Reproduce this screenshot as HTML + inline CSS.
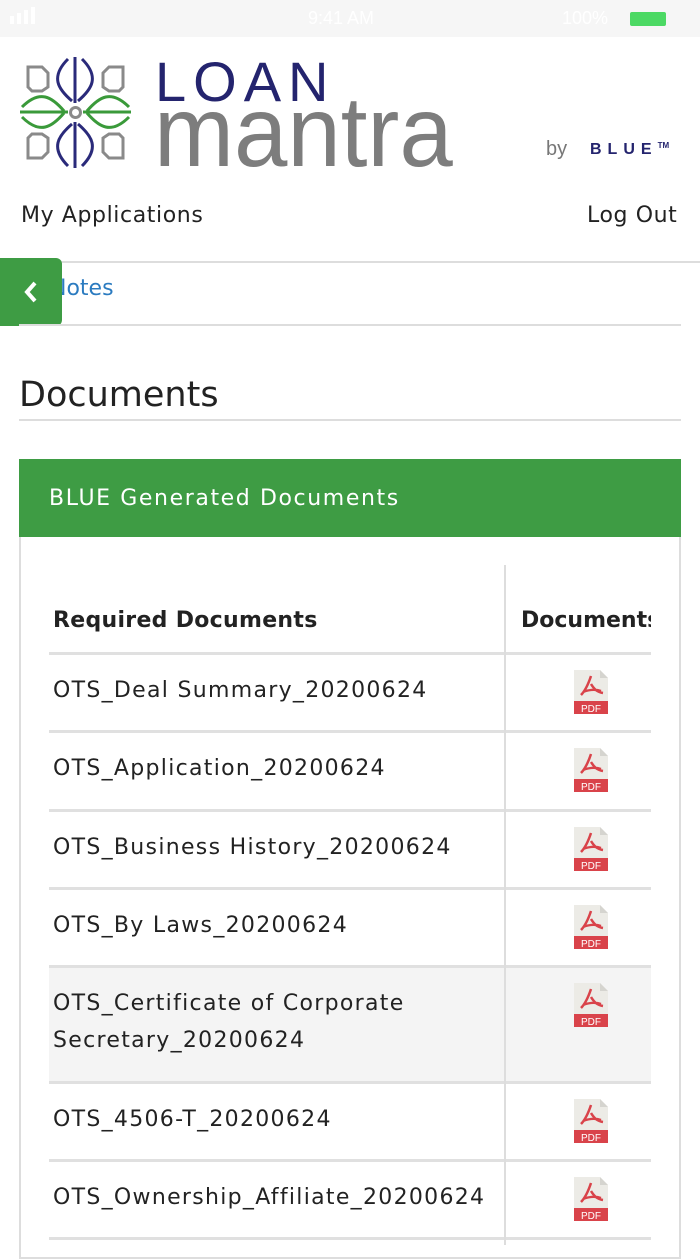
<!DOCTYPE html>
<html><head><meta charset="utf-8"><style>
*{margin:0;padding:0;box-sizing:border-box}
body{width:700px;height:1244px;overflow:hidden;background:#fff;font-family:"DejaVu Sans","Liberation Sans",sans-serif;position:relative;color:#222}
.abs{position:absolute}
.sb{left:0;top:0;width:700px;height:37px;background:#f6f6f6;color:#fff;font-size:18px;font-family:"Liberation Sans",sans-serif}
.row{position:absolute;left:49px;width:602px;border-top:3px solid #e0e0e0}
.row .t{position:absolute;left:4px;font-size:22px;color:#222;letter-spacing:1.3px;line-height:37px;white-space:nowrap}
.pdf{position:absolute;left:574px;width:34px;height:44px}
</style></head><body>
<div class="abs sb">
 <div class="abs" style="left:10px;top:16px;width:4px;height:8px;background:#fff"></div>
 <div class="abs" style="left:17px;top:13px;width:4px;height:11px;background:#fff"></div>
 <div class="abs" style="left:24px;top:10px;width:4px;height:14px;background:#fff"></div>
 <div class="abs" style="left:31px;top:7px;width:4px;height:17px;background:#fff"></div>
 <div class="abs" style="left:308px;top:8px;">9:41 AM</div>
 <div class="abs" style="left:562px;top:8px;">100%</div>
 <div class="abs" style="left:630px;top:12px;width:36px;height:14px;background:#4cd964;border-radius:2px"></div>
</div>
<svg class="abs" style="left:18px;top:55px" width="115" height="115" viewBox="0 0 115 115" fill="none" stroke-width="3">
 <g stroke="#8a8a8a"><path d="M10 12h14l6 6v14l-6 4h-10l-4-4z"/><path d="M105 12h-14l-6 6v14l6 4h10l4-4z"/><path d="M10 103h14l6-6v-14l-6-4h-10l-4 4z"/><path d="M105 103h-14l-6-6v-14l6-4h10l4 4z"/></g>
 <g stroke="#2a2a7a"><path d="M57 2v46M57 67v46"/><path d="M50 4c-18 18-10 30 4 42M64 4c18 18 10 30-4 42M50 111c-18-18-10-30 4-42M64 111c18-18 10-30-4-42"/></g>
 <g stroke="#3a9a3a"><path d="M2 57h48M65 57h48"/><path d="M4 52c18-18 30-10 42 4M4 62c18 18 30 10 42-4M111 52c-18-18-30-10-42 4M111 62c-18 18-30 10-42-4"/></g>
 <circle cx="57.5" cy="57.5" r="5" stroke="#8a8a8a"/>
</svg>
<div class="abs" style="left:155px;top:52px;font-size:56px;color:#24246e;letter-spacing:7px;line-height:60px;font-family:'Liberation Sans',sans-serif">LOAN</div>
<div class="abs" style="left:154px;top:77px;font-size:100px;color:#7d7d7d;line-height:110px;font-family:'Liberation Sans',sans-serif;transform:scaleX(0.96);transform-origin:0 0">mantra</div>
<div class="abs" style="left:546px;top:138px;font-size:20px;color:#777;font-family:'Liberation Sans',sans-serif">by</div>
<div class="abs" style="left:590px;top:141px;font-size:16px;color:#24246e;font-weight:bold;letter-spacing:6px;font-family:'Liberation Sans',sans-serif">BLUE<span style="font-size:8px;letter-spacing:0;vertical-align:top">TM</span></div>
<div class="abs" style="left:21px;top:203px;font-size:22px;letter-spacing:.6px">My Applications</div>
<div class="abs" style="left:587px;top:203px;font-size:22px;letter-spacing:.6px">Log Out</div>
<div class="abs" style="left:0;top:261px;width:700px;height:2px;background:#ddd"></div>
<div class="abs" style="left:50px;top:276px;font-size:22px;color:#2b7bc0">Notes</div>
<div class="abs" style="left:0;top:258px;width:62px;height:68px;background:#3e9c44;border-radius:0 6px 6px 0"></div>
<svg class="abs" style="left:22px;top:280px" width="18" height="24"><path d="M13 3L5 12l8 9" stroke="#fff" stroke-width="4" fill="none"/></svg>
<div class="abs" style="left:19px;top:324px;width:662px;height:2px;background:#ddd"></div>
<div class="abs" style="left:19px;top:375px;font-size:35px;color:#222">Documents</div>
<div class="abs" style="left:19px;top:419px;width:662px;height:2px;background:#ddd"></div>
<div class="abs" style="left:19px;top:459px;width:662px;height:800px;border:2px solid #ddd;border-top:none"></div>
<div class="abs" style="left:19px;top:459px;width:662px;height:78px;background:#3e9c44;color:#fff;font-size:22px;padding:27px 0 0 30px;letter-spacing:1.6px">BLUE Generated Documents</div>
<div class="abs" style="left:53px;top:608px;font-size:22px;font-weight:bold;letter-spacing:.3px">Required Documents</div>
<div class="abs" style="left:521px;top:608px;font-size:22px;font-weight:bold;width:130px;overflow:hidden;white-space:nowrap">Documents</div>
<div class="row" style="top:652px;height:79px"><div class="t" style="top:17px">OTS_Deal Summary_20200624</div></div>
<div class="row" style="top:730px;height:79px"><div class="t" style="top:17px">OTS_Application_20200624</div></div>
<div class="row" style="top:809px;height:79px"><div class="t" style="top:17px">OTS_Business History_20200624</div></div>
<div class="row" style="top:887px;height:79px"><div class="t" style="top:17px">OTS_By Laws_20200624</div></div>
<div class="row" style="top:965px;height:117px;background:#f4f4f4"><div class="t" style="top:17px">OTS_Certificate of Corporate<br>Secretary_20200624</div></div>
<div class="row" style="top:1081px;height:79px"><div class="t" style="top:17px">OTS_4506-T_20200624</div></div>
<div class="row" style="top:1159px;height:79px"><div class="t" style="top:17px">OTS_Ownership_Affiliate_20200624</div></div>
<div class="row" style="top:1237px;height:10px"></div>
<div class="abs" style="left:504px;top:565px;width:2px;height:680px;background:#ddd"></div>
<svg width="0" height="0" style="position:absolute"><defs><g id="p"><path d="M0 0h26l8 8v36H0z" fill="#ecebe6"/><path d="M26 0v8h8z" fill="#d5d4cf"/><rect x="0" y="31" width="34" height="13" fill="#d9434a"/><text x="17" y="42" font-size="10" fill="#fff" text-anchor="middle" font-family="Liberation Sans">PDF</text><path d="M17 6c-2 6-5 14-10 19M17 14c3 5 6 8 12 9M9 22c5-2 12-3 18-1" stroke="#d9434a" stroke-width="2.5" fill="none"/></g></defs></svg>
<svg class="pdf" style="top:670px"><use href="#p"/></svg>
<svg class="pdf" style="top:748px"><use href="#p"/></svg>
<svg class="pdf" style="top:827px"><use href="#p"/></svg>
<svg class="pdf" style="top:905px"><use href="#p"/></svg>
<svg class="pdf" style="top:983px"><use href="#p"/></svg>
<svg class="pdf" style="top:1099px"><use href="#p"/></svg>
<svg class="pdf" style="top:1177px"><use href="#p"/></svg>
</body></html>
